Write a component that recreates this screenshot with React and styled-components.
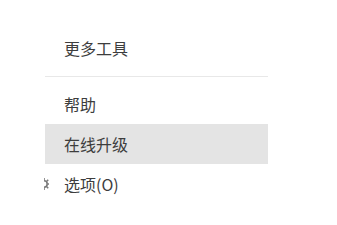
import React from "react";
import styled, { createGlobalStyle } from "styled-components";

const GlobalStyle = createGlobalStyle`
  html, body {
    margin: 0;
    padding: 0;
    background: #ffffff;
  }
  body {
    font-family: "Noto Sans CJK SC", "Noto Sans", sans-serif;
  }
`;

const Page = styled.div`
  width: 337px;
  height: 225px;
  padding-top: 28px;
  padding-left: 45px;
  box-sizing: border-box;
  overflow: hidden;
`;

const Menu = styled.ul`
  list-style: none;
  margin: 0;
  padding: 0;
  width: 223px;
`;

const Item = styled.li`
  position: relative;
  display: flex;
  align-items: center;
  height: 40px;
  padding-left: 19px;
  font-size: 16px;
  color: #3d3d3d;
  background: ${(p) => (p.$active ? "#e4e4e4" : "transparent")};
`;

const Separator = styled.li`
  height: 1px;
  margin: 8px 0 7px;
  background: #e8e8e8;
`;

const IconSlot = styled.span`
  position: absolute;
  left: -1px;
  top: 50%;
  width: 5px;
  height: 14px;
  margin-top: -7px;
  overflow: hidden;
  display: flex;
  justify-content: flex-end;
`;

function Gear() {
  return (
    <svg width="14" height="14" viewBox="0 0 14 14" style={{ flex: "none", marginRight: -2 }}>
      <g fill="none" stroke="#7a7a7a" strokeWidth="1.6">
        <circle cx="7" cy="7" r="3.2" />
        <path d="M7 1v2M7 11v2M1 7h2M11 7h2M2.8 2.8l1.4 1.4M9.8 9.8l1.4 1.4M2.8 11.2l1.4-1.4M9.8 4.2l1.4-1.4" />
      </g>
    </svg>
  );
}

export default function App() {
  return (
    <>
      <GlobalStyle />
      <Page>
        <Menu>
          <Item>更多工具</Item>
          <Separator />
          <Item>帮助</Item>
          <Item $active>在线升级</Item>
          <Item>
            <IconSlot>
              <Gear />
            </IconSlot>
            选项(O)
          </Item>
        </Menu>
      </Page>
    </>
  );
}
